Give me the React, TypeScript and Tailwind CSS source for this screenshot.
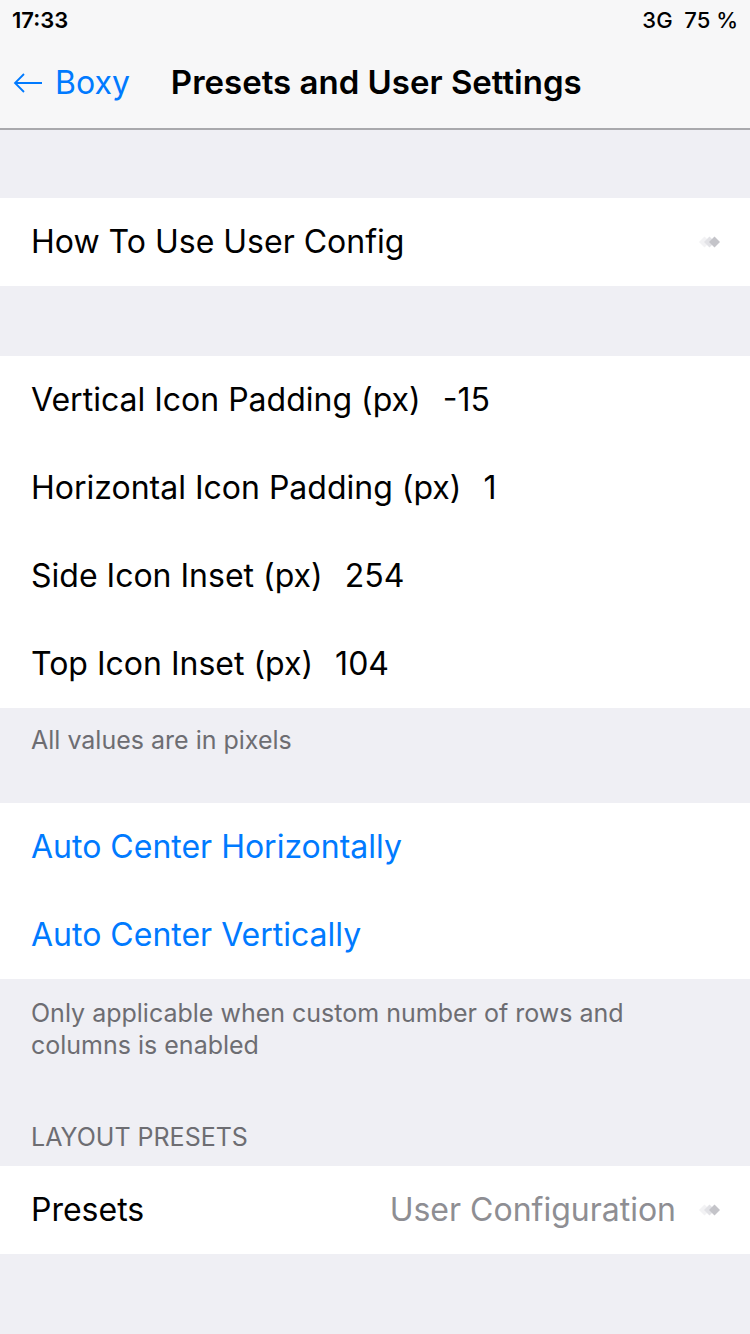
import React from "react";

const font = { fontFamily: "Inter, 'Noto Sans', sans-serif" };

function Chevron() {
  return (
    <svg width="26" height="14" viewBox="0 0 26 14" className="shrink-0">
      <polygon points="3,7 8.5,1.5 14,7 8.5,12.5" fill="#f2f2f4" />
      <polygon points="8,7 13.5,1.5 19,7 13.5,12.5" fill="#e2e2e6" />
      <polygon points="13,7 18.5,1.5 24,7 18.5,12.5" fill="#c4c4c9" />
    </svg>
  );
}

function Row({ label, value }: { label: string; value: string }) {
  return (
    <div className="h-[88px] flex items-center pl-[31px] text-[32px] text-black">
      <span>{label}</span>
      <span className="ml-[22px]">{value}</span>
    </div>
  );
}

export default function App() {
  return (
    <div className="w-[750px] h-[1334px] bg-[#efeff4] flex flex-col overflow-hidden" style={font}>
      <div className="bg-[#f7f7f8] border-b-2 border-[#a9a9ad] h-[130px] flex flex-col">
        <div className="h-[40px] flex items-center justify-between px-[12px] text-[22px] font-semibold text-black">
          <span>17:33</span>
          <span className="font-medium">3G&nbsp;&nbsp;75 %</span>
        </div>
        <div className="flex-1 flex items-center pb-[2px]">
          <svg width="30" height="20" viewBox="0 0 30 20" className="ml-[13px]">
            <path d="M29 10 H2 M11 1 L2 10 L11 19" fill="none" stroke="#007aff" strokeWidth="1.8" />
          </svg>
          <span className="ml-[12px] text-[#007aff] text-[32px]">Boxy</span>
          <span className="ml-[41px] text-[33px] font-semibold text-black">Presets and User Settings</span>
        </div>
      </div>

      <div className="h-[68px]" />
      <div className="bg-white h-[88px] flex items-center justify-between pl-[31px] pr-[28px] text-[32px] text-black">
        <span>How To Use User Config</span>
        <Chevron />
      </div>

      <div className="h-[70px]" />
      <div className="bg-white flex flex-col">
        <Row label="Vertical Icon Padding (px)" value=" -15" />
        <Row label="Horizontal Icon Padding (px)" value="1" />
        <Row label="Side Icon Inset (px)" value="254" />
        <Row label="Top Icon Inset (px)" value="104" />
      </div>
      <div className="h-[95px] pl-[31px] pt-[14px] text-[25px] text-[#6d6d72]">All values are in pixels</div>

      <div className="bg-white flex flex-col">
        <div className="h-[88px] flex items-center pl-[31px] text-[32px] text-[#007aff]">Auto Center Horizontally</div>
        <div className="h-[88px] flex items-center pl-[31px] text-[32px] text-[#007aff]">Auto Center Vertically</div>
      </div>
      <div className="pl-[31px] pr-[100px] pt-[18px] text-[25px] leading-[32px] text-[#6d6d72]">
        Only applicable when custom number of rows and columns is enabled
      </div>
      <div className="h-[105px] flex items-end pl-[31px] pb-[10px] text-[25px] text-[#6d6d72]">LAYOUT PRESETS</div>
      <div className="bg-white h-[88px] flex items-center justify-between pl-[31px] pr-[28px] text-[32px]">
        <span className="text-black">Presets</span>
        <div className="flex items-center gap-[20px]">
          <span className="text-[#8e8e93]">User Configuration</span>
          <Chevron />
        </div>
      </div>
    </div>
  );
}
